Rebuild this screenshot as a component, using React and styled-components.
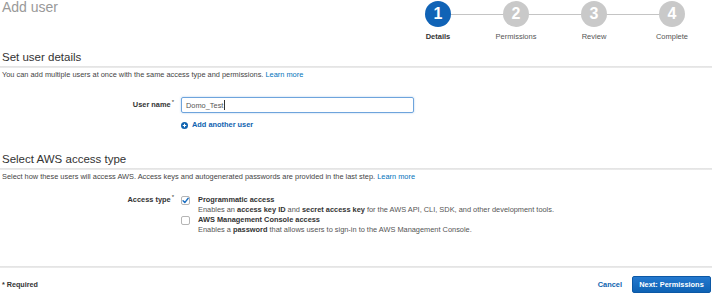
import React from "react";
import styled, { createGlobalStyle } from "styled-components";

const Global = createGlobalStyle`
  html, body { margin: 0; padding: 0; background: #fff; }
  body { font-family: "Liberation Sans", Arial, sans-serif; color: #444; }
`;

const SMALL = "7.4px";

const Page = styled.div`
  width: 712px;
  height: 293px;
  overflow: hidden;
  display: flex;
  flex-direction: column;
`;

const Header = styled.div`
  height: 44px;
  display: flex;
  justify-content: space-between;
  align-items: flex-start;
  padding: 0 1px 0 2px;
`;

const Title = styled.h1`
  margin: 0;
  font-size: 14px;
  line-height: 14px;
  font-weight: normal;
  color: #999;
`;

const Stepper = styled.ol`
  list-style: none;
  margin: 0;
  padding: 0;
  display: grid;
  grid-template-columns: repeat(4, 78px);
`;

const Step = styled.li`
  position: relative;
  display: flex;
  flex-direction: column;
  align-items: center;
  &::before {
    content: "";
    position: absolute;
    top: 14px;
    height: 1px;
    background: #c4c4c4;
    left: ${(p) => (p.$first ? "50%" : "0")};
    right: ${(p) => (p.$last ? "50%" : "0")};
  }
`;

const Circle = styled.span`
  position: relative;
  margin-top: 1px;
  width: 26px;
  height: 26px;
  border-radius: 50%;
  background: ${(p) => (p.$active ? "#1063b6" : "#c9c9c9")};
  color: #fff;
  font-size: 16px;
  font-weight: bold;
  display: flex;
  align-items: center;
  justify-content: center;
`;

const StepLabel = styled.span`
  margin-top: 5px;
  font-size: 7.5px;
  line-height: 10px;
  color: ${(p) => (p.$active ? "#333" : "#555")};
  font-weight: ${(p) => (p.$active ? "bold" : "normal")};
`;

const Section = styled.section`
  display: flex;
  flex-direction: column;
  margin-top: ${(p) => p.$top}px;
`;

const Heading = styled.h2`
  margin: 0;
  padding: 0 2px;
  font-size: 11.5px;
  line-height: 13px;
  font-weight: normal;
  color: #333;
`;

const Divider = styled.hr`
  margin: ${(p) => p.$top || 0}px 0 0;
  border: 0;
  height: 2px;
  background: linear-gradient(#e2e2e2, #ececec);
`;

const Desc = styled.p`
  margin: 2px 0 0;
  padding: 0 2px;
  font-size: ${SMALL};
  line-height: 10px;
  color: #444;
`;

const Link = styled.a`
  color: #0073bb;
  text-decoration: none;
  cursor: pointer;
`;

const FormRow = styled.div`
  display: grid;
  grid-template-columns: 172px 1fr;
  column-gap: 7px;
  padding-left: 2px;
  margin-top: ${(p) => p.$top}px;
  align-items: ${(p) => (p.$start ? "start" : "center")};
`;

const Label = styled.label`
  text-align: right;
  font-size: ${SMALL};
  font-weight: bold;
  color: #333;
  line-height: 10px;
`;

const Req = styled.sup`
  font-size: 6px;
  line-height: 0;
  font-weight: normal;
  margin-left: 1px;
`;

const TextField = styled.div`
  box-sizing: border-box;
  width: 233px;
  height: 16px;
  border: 1px solid #6ea4dc;
  border-radius: 2px;
  box-shadow: 0 0 2px rgba(80, 150, 220, 0.5);
  padding-left: 4px;
  font-size: ${SMALL};
  color: #555;
  display: flex;
  align-items: center;
`;

const Caret = styled.span`
  display: inline-block;
  width: 1px;
  height: 10px;
  background: #333;
  margin-left: 1px;
`;

const AddUser = styled.a`
  display: flex;
  align-items: center;
  gap: 4px;
  margin: 7px 0 0 181px;
  font-size: ${SMALL};
  line-height: 10px;
  font-weight: bold;
  color: #0f63b0;
  cursor: pointer;
`;

const Options = styled.div`
  display: flex;
  flex-direction: column;
`;

const Option = styled.div`
  display: grid;
  grid-template-columns: 9px 1fr;
  column-gap: 8px;
`;

const Box = styled.span`
  box-sizing: border-box;
  width: 9px;
  height: 9px;
  margin-top: 1px;
  border: 1px solid #b5b5b5;
  border-radius: 2px;
  background: #fff;
  display: flex;
  align-items: center;
  justify-content: center;
`;

const OptTitle = styled.div`
  font-size: ${SMALL};
  line-height: 10px;
  font-weight: bold;
  color: #333;
`;

const OptDesc = styled.div`
  grid-column: 2;
  font-size: ${SMALL};
  line-height: 10px;
  color: #555;
  b { color: #333; }
`;

const Footer = styled.div`
  display: flex;
  align-items: center;
  justify-content: space-between;
  padding: 8px 1px 0 2px;
`;

const Required = styled.span`
  font-size: 7.2px;
  font-weight: bold;
  color: #333;
`;

const Actions = styled.div`
  display: flex;
  align-items: center;
  gap: 10px;
`;

const TextButton = styled.a`
  font-size: ${SMALL};
  font-weight: bold;
  color: #0f63b0;
  cursor: pointer;
`;

const PrimaryButton = styled.button`
  box-sizing: border-box;
  height: 17px;
  width: 79px;
  padding: 0;
  border: 1px solid #0c58a5;
  border-radius: 2px;
  background: linear-gradient(#2479cf, #0e62b4);
  color: #fff;
  font-family: inherit;
  font-size: ${SMALL};
  font-weight: bold;
  cursor: pointer;
`;

const steps = ["Details", "Permissions", "Review", "Complete"];

function Check() {
  return (
    <svg width="7" height="7" viewBox="0 0 10 10">
      <path d="M1.5 5.5 L4 8 L8.8 1.8" fill="none" stroke="#1b6fc2" strokeWidth="2" strokeLinecap="round" strokeLinejoin="round" />
    </svg>
  );
}

function PlusCircle() {
  return (
    <svg width="7" height="7" viewBox="0 0 14 14">
      <circle cx="7" cy="7" r="7" fill="#0f63b0" />
      <path d="M7 3.5 V10.5 M3.5 7 H10.5" stroke="#fff" strokeWidth="2.2" />
    </svg>
  );
}

export default function App() {
  return (
    <>
      <Global />
      <Page>
        <Header>
          <Title>Add user</Title>
          <Stepper>
            {steps.map((s, i) => (
              <Step key={s} $first={i === 0} $last={i === steps.length - 1}>
                <Circle $active={i === 0}>{i + 1}</Circle>
                <StepLabel $active={i === 0}>{s}</StepLabel>
              </Step>
            ))}
          </Stepper>
        </Header>

        <Section $top={8}>
          <Heading>Set user details</Heading>
          <Divider $top={2} />
          <Desc>
            You can add multiple users at once with the same access type and permissions. <Link>Learn more</Link>
          </Desc>
          <FormRow $top={17}>
            <Label>
              User name<Req>*</Req>
            </Label>
            <TextField>
              Domo_Test<Caret />
            </TextField>
          </FormRow>
          <AddUser>
            <PlusCircle />
            Add another user
          </AddUser>
        </Section>

        <Section $top={23}>
          <Heading>Select AWS access type</Heading>
          <Divider $top={2} />
          <Desc>
            Select how these users will access AWS. Access keys and autogenerated passwords are provided in the last step.{" "}
            <Link>Learn more</Link>
          </Desc>
          <FormRow $top={13} $start>
            <Label>
              Access type<Req>*</Req>
            </Label>
            <Options>
              <Option>
                <Box>
                  <Check />
                </Box>
                <OptTitle>Programmatic access</OptTitle>
                <OptDesc>
                  Enables an <b>access key ID</b> and <b>secret access key</b> for the AWS API, CLI, SDK, and other development tools.
                </OptDesc>
              </Option>
              <Option>
                <Box />
                <OptTitle>AWS Management Console access</OptTitle>
                <OptDesc>
                  Enables a <b>password</b> that allows users to sign-in to the AWS Management Console.
                </OptDesc>
              </Option>
            </Options>
          </FormRow>
        </Section>

        <Divider $top={31} />
        <Footer>
          <Required>* Required</Required>
          <Actions>
            <TextButton>Cancel</TextButton>
            <PrimaryButton>Next: Permissions</PrimaryButton>
          </Actions>
        </Footer>
      </Page>
    </>
  );
}
